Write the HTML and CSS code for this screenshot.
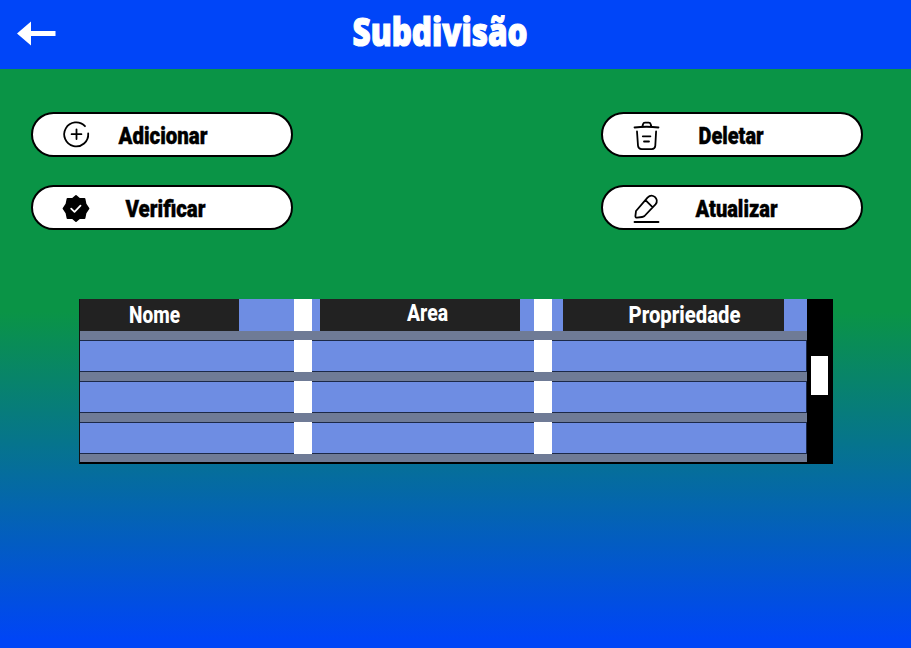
FILE: index.html
```html
<!DOCTYPE html>
<html lang="pt">
<head>
<meta charset="utf-8">
<title>Subdivisão</title>
<link rel="stylesheet" href="styles.css">
</head>
<body>
<header class="topbar">
  <svg class="back" viewBox="0 0 40 26"><path d="M0 12.500 14 .5V10H38.500V15H14V24.500Z"/></svg>
  <svg class="title" viewBox="0 0 180 48"><text x="1.500" y="37.500" textLength="175" lengthAdjust="spacingAndGlyphs">Subdivisão</text></svg>
</header>
<main>
  <section class="actions">
    <button class="action">
      <svg class="icon" viewBox="0 0 30 30"><path d="M24 6.200A12 12 0 1 0 27.200 13.500M15.500 9.300v9.800M10.600 14.200h9.800"/></svg>
      <svg class="label" viewBox="0 0 110 30"><text x="55" y="23.500" text-anchor="middle" textLength="89" lengthAdjust="spacingAndGlyphs">Adicionar</text></svg>
    </button>
    <button class="action">
      <svg class="icon" viewBox="0 0 30 30"><path d="M11.500 6 12 4.200q.4-1.500 2-1.500h3.700q1.600 0 2 1.500l.5 1.800M3.500 7.500q12-1.500 24 0M6 11.500l1 14.300q.3 3.300 3.700 3.300h10q3.400 0 3.600-3.300l.8-14.300M11.800 16.300h7.600M13 21.500h5"/></svg>
      <svg class="label" viewBox="0 0 110 30"><text x="53" y="23.500" text-anchor="middle" textLength="65" lengthAdjust="spacingAndGlyphs">Deletar</text></svg>
    </button>
    <button class="action">
      <svg class="icon" viewBox="0 0 30 30"><path class="solid" d="M15 3 18.500 6 23.500 6 24.500 11 27.500 15.500 24.500 20 23.500 25 18.500 25 15 28 11.500 25 6.500 25 5.500 20 2.500 15.500 5.500 11 6.500 6 11.500 6Z"/><path class="tick" d="m10.200 15.700 3.300 3.200 6-6.200"/></svg>
      <svg class="label" viewBox="0 0 110 30"><text x="57.500" y="23.500" text-anchor="middle" textLength="80" lengthAdjust="spacingAndGlyphs">Verificar</text></svg>
    </button>
    <button class="action">
      <svg class="icon" viewBox="0 0 30 30"><path d="M5 18 16.500 4.700q3.500-3.800 7.300-.8 3.800 3.500.7 7.500L13.500 23q-1 .8-2.500 1L6 24.600q-1.500.2-1.600-1.400ZM14.500 7.200l7 7M3.500 29h24"/></svg>
      <svg class="label" viewBox="0 0 110 30"><text x="58.500" y="23.500" text-anchor="middle" textLength="82" lengthAdjust="spacingAndGlyphs">Atualizar</text></svg>
    </button>
  </section>
  <section class="table">
    <div class="grid">
      <div class="row head">
        <div class="cell"><div class="name nome"><svg viewBox="0 0 160 31"><text x="49" y="24" textLength="51" lengthAdjust="spacingAndGlyphs">Nome</text></svg></div></div>
        <div class="sep"></div>
        <div class="cell"><div class="name area"><svg viewBox="0 0 200 31"><text x="87" y="21.500" textLength="41" lengthAdjust="spacingAndGlyphs">Area</text></svg></div></div>
        <div class="sep"></div>
        <div class="cell"><div class="name prop"><svg viewBox="0 0 221 31"><text x="65.500" y="24" textLength="112" lengthAdjust="spacingAndGlyphs">Propriedade</text></svg></div></div>
      </div>
      <div class="row"><div class="cell"></div><div class="sep"></div><div class="cell"></div><div class="sep"></div><div class="cell"></div></div>
      <div class="row"><div class="cell"></div><div class="sep"></div><div class="cell"></div><div class="sep"></div><div class="cell"></div></div>
      <div class="row"><div class="cell"></div><div class="sep"></div><div class="cell"></div><div class="sep"></div><div class="cell"></div></div>
    </div>
    <div class="scroll"><div class="thumb"></div></div>
  </section>
</main>
</body>
</html>
```
FILE: styles.css
```css
* { box-sizing: border-box; }
body {
  margin: 0;
  height: 648px;
  overflow: hidden;
  background: linear-gradient(to bottom, #0a9446 0, #0a9446 312px, #0045f6 640px);
  font-family: Roboto, "Liberation Sans", sans-serif;
}
svg { display: block; overflow: visible; }
.topbar {
  height: 69px;
  background: #0045f8;
  display: flex;
  align-items: flex-start;
}
.back { width: 40px; height: 26px; margin: 21px 0 0 17px; fill: #fff; }
.title { width: 180px; height: 48px; margin: 8px 0 0 294px; fill: #fff; }
.title text { font: 800 38px "Open Sans", sans-serif; stroke: #fff; stroke-width: 1.200px; }
.actions {
  display: grid;
  grid-template-columns: 262px 262px;
  column-gap: 308px;
  row-gap: 28px;
  padding: 43px 0 0 31px;
}
.action {
  height: 45px;
  padding: 0 0 0 28px;
  border: 2px solid #000;
  border-radius: 23px;
  background: #fff;
  display: flex;
  align-items: center;
}
.icon {
  width: 30px;
  height: 30px;
  fill: none;
  stroke: #000;
  stroke-width: 1.800;
  stroke-linecap: round;
  stroke-linejoin: round;
}
.icon .solid { fill: #000; }
.icon .tick { stroke: #fff; }
.label { width: 110px; height: 30px; margin-left: 17px; }
.label text { font: 900 23px Roboto, sans-serif; fill: #000; stroke: #000; stroke-width: .4px; }
.table { display: flex; width: 754px; height: 165px; margin: 69px 0 0 79px; }
.grid {
  width: 728px;
  background: #6f7b96;
  border-left: 1px solid #111;
  border-bottom: 2px solid #000;
  display: flex;
  flex-direction: column;
  gap: 9px;
}
.row { display: grid; grid-template-columns: 214px 18px 222px 18px 255px; height: 32px; }
.cell {
  background: #6e8de3;
  border-top: 1px solid #1c2948;
  border-bottom: 1px solid #1c2948;
}
.cell:last-child { border-right: 1px solid #1c2948; }
.head .cell, .head .cell:last-child { border: 0; }
.sep { background: #fff; }
.name { height: 32px; background: #222; }
.name text { font: 800 23px Roboto, sans-serif; fill: #fff; }
.nome { width: 159px; }
.nome svg { width: 160px; height: 31px; }
.area { width: 200px; margin-left: 8px; }
.area svg { width: 200px; height: 31px; }
.prop { width: 221px; margin-left: 11px; }
.prop svg { width: 221px; height: 31px; }
.scroll { width: 26px; background: #000; padding: 57px 0 0 4px; }
.thumb { width: 17px; height: 38.500px; background: #fff; }
```
